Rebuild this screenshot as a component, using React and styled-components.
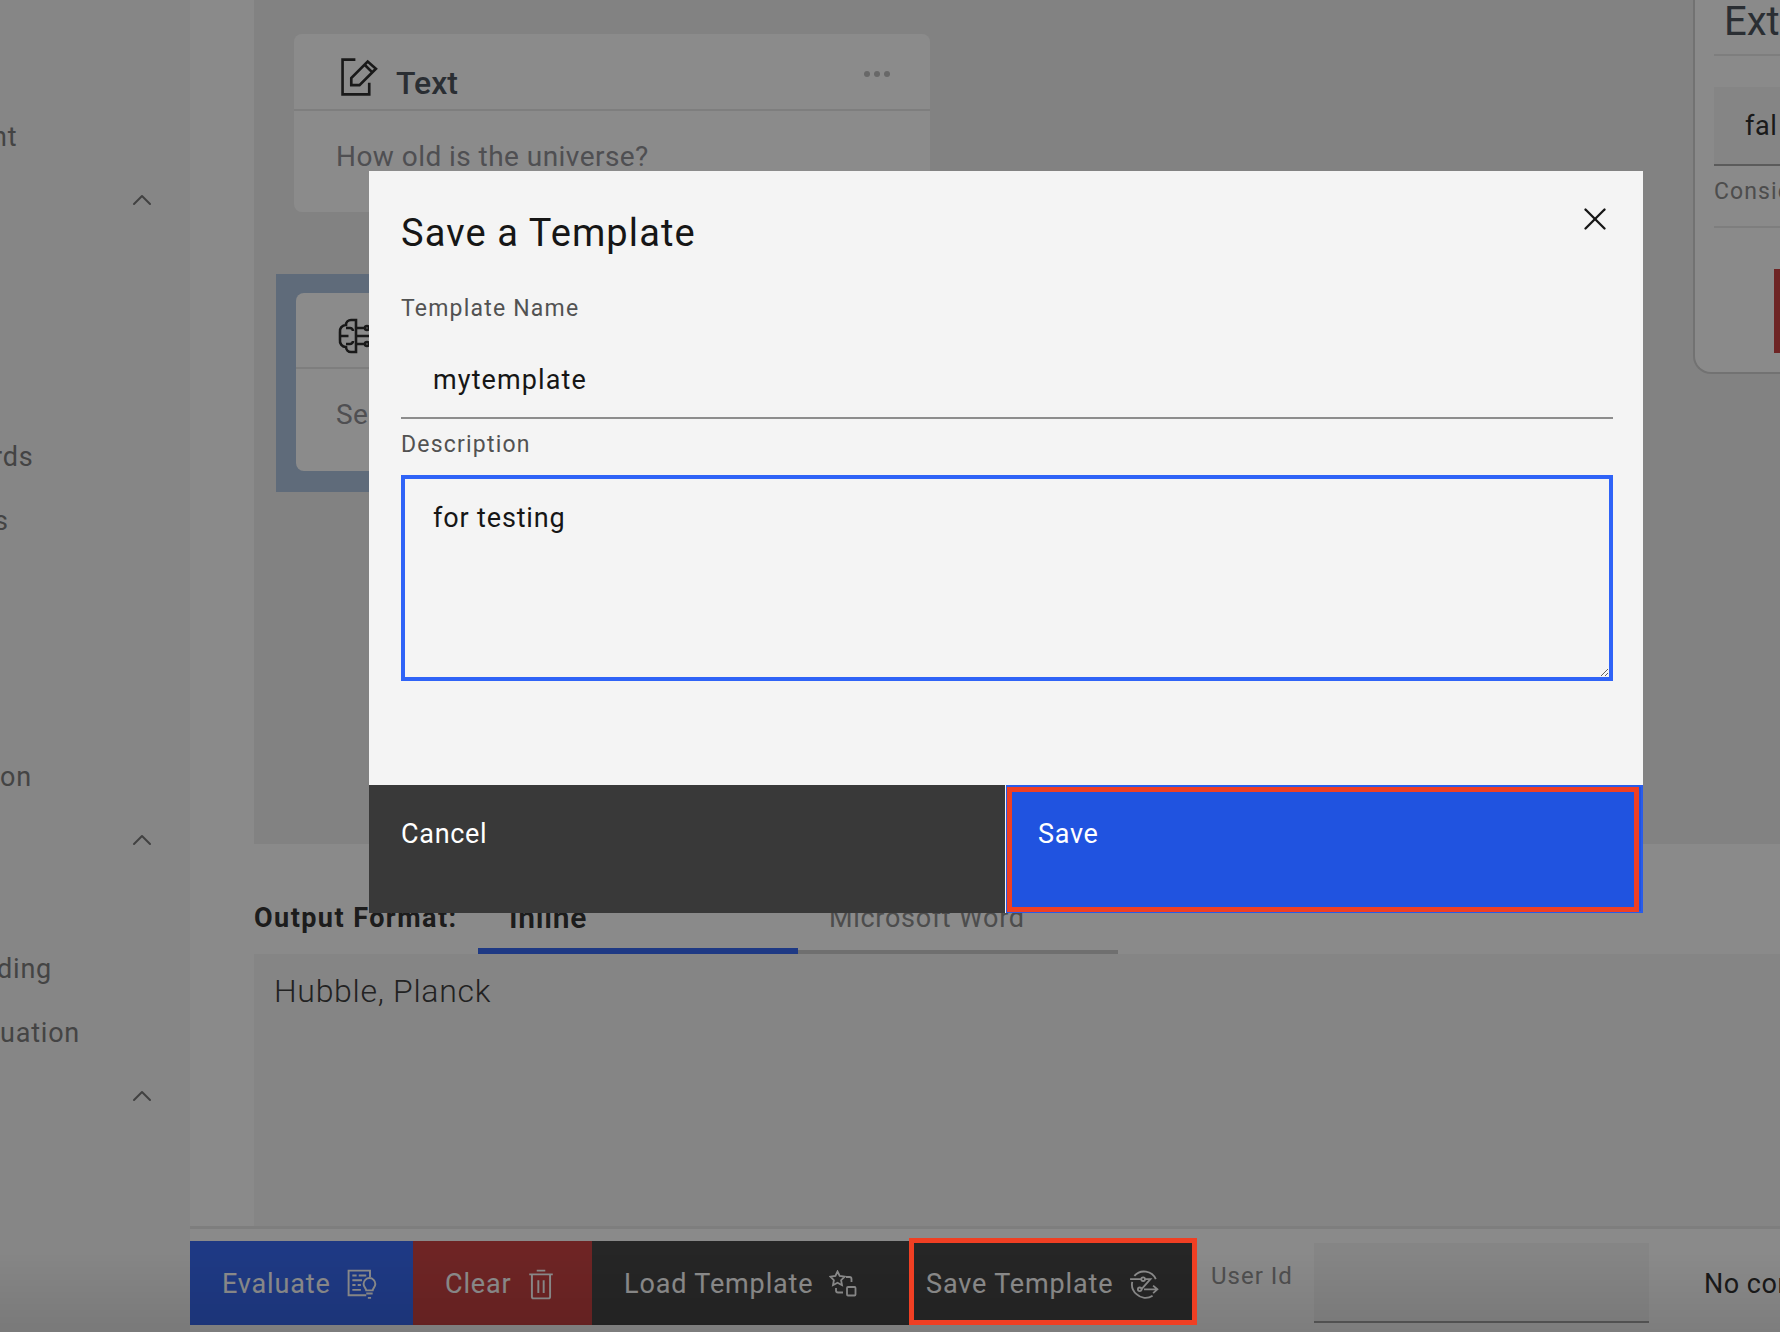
import React from 'react';
import styled, { createGlobalStyle } from 'styled-components';
import { ChevronUp, X } from 'lucide-react';

const GlobalStyle = createGlobalStyle`
  html, body, #root {
    margin: 0;
    height: 100%;
  }
  body {
    font-family: Roboto, "Liberation Sans", sans-serif;
    background: #fbfbfb;
    overflow: hidden;
  }
`;

const sideRows = [
  { text: 'nt', shift: -8 }, { chevron: true }, {}, {}, {},
  { text: 'rds', shift: -7 }, { text: 's', shift: -6 }, {}, {}, {},
  { text: 'on' }, { chevron: true }, {},
  { text: 'ding', shift: -3 }, { text: 'uation' }, { chevron: true },
];

function EditIcon() {
  return (
    <svg width="40" height="40" viewBox="0 0 39 39" fill="none" stroke="currentColor" strokeWidth="2.6">
      <path d="M15 2.5H2.5v34h26V25" />
      <path d="M11 27.5v-7L27 4.5l8 7-16 16z" />
      <path d="M24 7.5l7.5 7.5" />
    </svg>
  );
}

function BrainIcon() {
  return (
    <svg width="38" height="36" viewBox="0 0 38 36" fill="none" stroke="currentColor" strokeWidth="2.6">
      <path d="M18 2h-5a5 5 0 0 0-5 5 6 6 0 0 0-6 7v8a6 6 0 0 0 6 7 5 5 0 0 0 5 5h5z" />
      <path d="M8 10h4a3 3 0 0 1 3 3M2.500 18h8M8 26h4a3 3 0 0 0 3-3" />
      <path d="M18 10h8M18 18h14M18 26h8" />
      <circle cx="29" cy="10" r="2" />
      <circle cx="29" cy="26" r="2" />
    </svg>
  );
}

function EvaluateIcon() {
  return (
    <svg width="31" height="31" viewBox="0 0 29 29" fill="none" stroke="currentColor" strokeWidth="1.8">
      <path d="M18 24.5H1.5v-23h20v6" />
      <path d="M5 6h4M11 6h7M5 10.5h9M5 15h3M10 15h3M5 19.5h8" />
      <path d="M18 20c0-2-2.500-3-2.500-6a5.500 5.500 0 0 1 11 0c0 3-2.500 4-2.500 6z" />
      <path d="M18 23h6M19.500 27h3" />
    </svg>
  );
}

function TrashIcon() {
  return (
    <svg width="26" height="31" viewBox="0 0 24 29" fill="none" stroke="currentColor" strokeWidth="1.8">
      <path d="M1 5h22M8 1.500h8" />
      <path d="M3.500 5v21a1.500 1.500 0 0 0 1.500 1.500h14a1.500 1.500 0 0 0 1.500-1.500V5" />
      <path d="M9.500 10.500v12M14.500 10.500v12" />
    </svg>
  );
}

function LoadIcon() {
  return (
    <svg width="28" height="28" viewBox="0 0 28 28" fill="none" stroke="currentColor" strokeWidth="1.8">
      <path d="M8.500 1.500l2.200 4.500 5 .7-3.600 3.500.9 5-4.500-2.400-4.500 2.400.9-5L1.400 6.700l5-.7z" />
      <path d="M17 7h3.500a2 2 0 0 1 2 2v3" />
      <path d="M7 18v2.500a2 2 0 0 0 2 2h5" />
      <rect x="18" y="17" width="8.500" height="8.500" rx="1" />
    </svg>
  );
}

function SaveTemplateIcon() {
  return (
    <svg width="30" height="30" viewBox="0 0 28 28" fill="none" stroke="currentColor" strokeWidth="1.7">
      <path d="M5 6.500A12 12 0 0 1 25 9.500" />
      <path d="M3 12a12 12 0 0 0 4 11.500A12 12 0 0 0 22 25" />
      <path d="M1 9.500h10.500M15 9.500h5L11.500 19M14 19h12M22.500 15.500l4 3.500-4 3.500" />
      <circle cx="13.200" cy="9.500" r="1.700" />
      <circle cx="10" cy="19" r="1.700" />
    </svg>
  );
}

export default function App() {
  return (
    <>
      <GlobalStyle />
      <Page>
        <Sidebar>
          {sideRows.map((row, i) => (
            <SideRow key={i}>
              {row.text && <SideText $shift={row.shift || 0}>{row.text}</SideText>}
              {row.chevron && <SideChevron><ChevronUp size={32} strokeWidth={1.5} /></SideChevron>}
            </SideRow>
          ))}
        </Sidebar>

        <Main>
          <Workspace>
            <Canvas>
              <CardColumn>
                <Card>
                  <CardHeader>
                    <EditIcon />
                    <CardTitle>Text</CardTitle>
                    <CardDots>
                      <span /><span /><span />
                    </CardDots>
                  </CardHeader>
                  <CardBody>How old is the universe?</CardBody>
                </Card>
                <SelectedFrame>
                  <Card>
                    <CardHeader>
                      <BrainIcon />
                    </CardHeader>
                    <CardBody>Se</CardBody>
                  </Card>
                </SelectedFrame>
              </CardColumn>

              <SidePanel>
                <PanelTitle>Ext</PanelTitle>
                <PanelInput>fal</PanelInput>
                <PanelHint>Consid</PanelHint>
                <PanelAction />
              </SidePanel>
            </Canvas>

            <OutputRow>
              <OutputLabel>Output Format:</OutputLabel>
              <Tab $active>Inline</Tab>
              <Tab>Microsoft Word</Tab>
            </OutputRow>
            <OutputArea>Hubble, Planck</OutputArea>
          </Workspace>

          <Toolbar>
            <ToolButton $bg="#3869f0" $width={223}>Evaluate<EvaluateIcon /></ToolButton>
            <ToolButton $bg="#c84343" $width={179}>Clear<TrashIcon /></ToolButton>
            <ToolButton $bg="#454545" $width={317}>Load Template<LoadIcon /></ToolButton>
            <SaveTemplateButton $bg="#454545" $width={287}>Save Template<SaveTemplateIcon /></SaveTemplateButton>
            <UserLabel>User Id</UserLabel>
            <UserInput />
            <StatusText>No con</StatusText>
          </Toolbar>
        </Main>
      </Page>

      <Scrim>
        <Modal>
          <ModalBody>
            <ModalHead>
              <ModalTitle>Save a Template</ModalTitle>
              <CloseButton type="button"><X size={38} strokeWidth={1.5} /></CloseButton>
            </ModalHead>
            <FieldLabel htmlFor="template-name">Template Name</FieldLabel>
            <NameInput id="template-name" defaultValue="mytemplate" />
            <DescriptionLabel htmlFor="template-description">Description</DescriptionLabel>
            <DescriptionInput id="template-description" defaultValue="for testing" />
          </ModalBody>
          <ModalFooter>
            <CancelButton type="button">Cancel</CancelButton>
            <SaveButton type="button">Save</SaveButton>
          </ModalFooter>
        </Modal>
      </Scrim>
    </>
  );
}

const Page = styled.div`
  display: flex;
  height: 1332px;
  overflow: hidden;
`;

const Sidebar = styled.div`
  width: 190px;
  flex-shrink: 0;
  background: #f4f4f4;
  padding-top: 105px;
  box-sizing: border-box;
  overflow: hidden;
`;

const SideRow = styled.div`
  height: 64px;
  display: flex;
  align-items: center;
  justify-content: space-between;
`;

const SideText = styled.span`
  margin-left: ${p => p.$shift}px;
  font-size: 27px;
  color: #7c7c7c;
  letter-spacing: 0.8px;
`;

const SideChevron = styled.span`
  display: flex;
  color: #777;
  margin-left: auto;
  margin-right: 32px;
  margin-top: -2px;
`;

const Main = styled.div`
  flex: 1;
  min-width: 0;
  display: flex;
  flex-direction: column;
`;

const Workspace = styled.div`
  height: 1229px;
  box-sizing: border-box;
  padding-left: 64px;
  border-bottom: 3px solid #e5e5e5;
  display: flex;
  flex-direction: column;
`;

const Canvas = styled.div`
  height: 844px;
  flex-shrink: 0;
  background: #ededed;
  display: flex;
  justify-content: space-between;
  align-items: flex-start;
`;

const CardColumn = styled.div`
  padding: 34px 0 0 40px;
  width: 636px;
`;

const Card = styled.div`
  background: #fdfdfd;
  border-radius: 8px;
  height: 178px;
  width: 636px;
  overflow: hidden;
`;

const CardHeader = styled.div`
  height: 77px;
  box-sizing: border-box;
  padding: 23px 40px 0 46px;
  border-bottom: 2px solid #e5e5e5;
  display: flex;
  align-items: flex-start;
  gap: 16px;
  color: #2f2f2f;
`;

const CardTitle = styled.span`
  font-size: 32px;
  font-weight: 500;
  line-height: 34px;
  margin-top: 9px;
  color: #4e555d;
`;

const CardDots = styled.span`
  margin-left: auto;
  margin-top: 14px;
  display: flex;
  gap: 4px;

  span {
    width: 6px;
    height: 6px;
    border-radius: 50%;
    background: #bdbdbd;
  }
`;

const CardBody = styled.div`
  padding: 29px 0 0 42px;
  font-size: 28px;
  line-height: 34px;
  color: #909095;
  letter-spacing: 0.45px;
`;

const SelectedFrame = styled.div`
  margin: 62px 0 0 -18px;
  padding: 19px 20px 21px;
  width: 640px;
  background: #adc3de;

  ${CardHeader} {
    height: 76px;
    padding: 25px 40px 0 42px;
  }

  ${CardBody} {
    padding-left: 40px;
  }
`;

const SidePanel = styled.div`
  width: 87px;
  height: 374px;
  box-sizing: border-box;
  padding-left: 19px;
  background: #fbfbfb;
  border-left: 2px solid #d0d0d0;
  border-bottom: 2px solid #d0d0d0;
  border-bottom-left-radius: 18px;
  overflow: hidden;
  white-space: nowrap;
`;

const PanelTitle = styled.div`
  height: 56px;
  box-sizing: border-box;
  padding: 0 0 0 10px;
  font-size: 40px;
  line-height: 44px;
  color: #4e555d;
  border-bottom: 2px solid #e5e5e5;
`;

const PanelInput = styled.div`
  margin-top: 31px;
  height: 79px;
  box-sizing: border-box;
  padding: 22px 0 0 31px;
  font-size: 27px;
  line-height: 34px;
  letter-spacing: 0.6px;
  color: #303030;
  background: #f2f2f2;
  border-bottom: 2px solid #a7a7a7;
`;

const PanelHint = styled.div`
  height: 62px;
  box-sizing: border-box;
  padding-top: 11px;
  font-size: 23px;
  line-height: 30px;
  letter-spacing: 1.1px;
  color: #8c8c8c;
  border-bottom: 2px solid #e5e5e5;
`;

const PanelAction = styled.div`
  margin: 41px 0 0 60px;
  height: 84px;
  background: #c84343;
`;

const OutputRow = styled.div`
  height: 110px;
  flex-shrink: 0;
  display: flex;
  align-items: stretch;
`;

const OutputLabel = styled.div`
  width: 224px;
  padding-top: 57px;
  box-sizing: border-box;
  font-size: 27px;
  line-height: 34px;
  font-weight: 700;
  letter-spacing: 1.45px;
  white-space: nowrap;
  color: #333;
`;

const Tab = styled.div`
  width: 320px;
  box-sizing: border-box;
  padding: 57px 0 0 31px;
  font-size: ${p => (p.$active ? 30 : 27)}px;
  line-height: 34px;
  font-weight: ${p => (p.$active ? 600 : 400)};
  letter-spacing: 0.7px;
  color: ${p => (p.$active ? '#333' : '#8c8c8c')};
  border-bottom: ${p => (p.$active ? '6px solid #3869f0' : '4px solid #cacaca')};
`;

const OutputArea = styled.div`
  flex: 1;
  background: #f2f2f2;
  padding: 18px 0 0 20px;
  font-size: 32px;
  line-height: 38px;
  font-weight: 300;
  letter-spacing: 0.7px;
  color: #3e3e3e;
`;

const Toolbar = styled.div`
  flex: 1;
  display: flex;
  align-items: flex-start;
  padding-top: 12px;
  color: #fff;
`;

const ToolButton = styled.div`
  width: ${p => p.$width}px;
  height: 84px;
  flex-shrink: 0;
  box-sizing: border-box;
  padding: 2px 0 0 32px;
  background: ${p => p.$bg};
  display: flex;
  align-items: center;
  gap: 16px;
  font-size: 27px;
  letter-spacing: 0.85px;
`;

const SaveTemplateButton = styled(ToolButton)`
  position: relative;
  padding-left: 17px;

  &::after {
    content: '';
    position: absolute;
    inset: -3px -1px 0 0;
    border: 5px solid #f03f23;
    z-index: 20;
  }
`;

const UserLabel = styled.div`
  margin: 19px 0 0 15px;
  width: 103px;
  flex-shrink: 0;
  font-size: 24px;
  line-height: 32px;
  letter-spacing: 1px;
  white-space: nowrap;
  color: #909090;
`;

const UserInput = styled.div`
  margin-top: 2px;
  width: 335px;
  height: 80px;
  flex-shrink: 0;
  box-sizing: border-box;
  background: #f2f2f2;
  border-bottom: 2px solid #a0a0a0;
`;

const StatusText = styled.div`
  margin: 26px 0 0 55px;
  font-size: 27px;
  line-height: 34px;
  letter-spacing: 0.5px;
  color: #303030;
  white-space: nowrap;
`;

const Scrim = styled.div`
  position: fixed;
  inset: 0;
  z-index: 10;
  background: linear-gradient(to bottom, rgba(0, 0, 0, 0.45) 94%, rgba(0, 0, 0, 0.5) 100%);
  display: flex;
  align-items: flex-start;
  padding: 171px 0 0 369px;
`;

const Modal = styled.div`
  width: 1274px;
  height: 742px;
  background: #f4f4f4;
  display: flex;
  flex-direction: column;
`;

const ModalBody = styled.div`
  flex: 1;
  padding: 0 30px 0 32px;
  display: flex;
  flex-direction: column;
`;

const ModalHead = styled.div`
  display: flex;
  justify-content: space-between;
  align-items: flex-start;
  height: 121px;
  padding-top: 38px;
  box-sizing: border-box;
`;

const ModalTitle = styled.h2`
  margin: 0;
  font-size: 38px;
  line-height: 48px;
  font-weight: 400;
  letter-spacing: 1.1px;
  color: #161616;
`;

const CloseButton = styled.button`
  border: none;
  background: none;
  padding: 0;
  margin: -9px -1px 0 0;
  display: flex;
  color: #161616;
`;

const FieldLabel = styled.label`
  font-size: 23px;
  line-height: 34px;
  letter-spacing: 1.2px;
  color: #525252;
`;

const NameInput = styled.input`
  margin-top: 20px;
  height: 73px;
  box-sizing: border-box;
  padding: 0 32px 4px;
  border: none;
  border-bottom: 2px solid #8d8d8d;
  outline: none;
  background: transparent;
  font: inherit;
  font-size: 27px;
  letter-spacing: 1.1px;
  color: #161616;
`;

const DescriptionLabel = styled(FieldLabel)`
  margin-top: 9px;
`;

const DescriptionInput = styled.textarea`
  margin-top: 13px;
  height: 206px;
  box-sizing: border-box;
  padding: 22px 28px;
  border: 4px solid #2f63f7;
  outline: none;
  background: transparent;
  font: inherit;
  font-size: 27px;
  line-height: 34px;
  letter-spacing: 0.85px;
  color: #161616;
`;

const ModalFooter = styled.div`
  height: 128px;
  display: flex;
`;

const FooterButton = styled.button`
  border: none;
  font: inherit;
  font-size: 27px;
  line-height: 34px;
  letter-spacing: 0.7px;
  color: #fff;
  display: flex;
  align-items: flex-start;
`;

const CancelButton = styled(FooterButton)`
  width: 636px;
  padding: 32px 0 0 32px;
  background: #393939;
`;

const SaveButton = styled(FooterButton)`
  position: relative;
  flex: 1;
  margin-left: 1px;
  padding: 32px 0 0 32px;
  background: #2053e0;
  box-shadow: inset 0 0 0 2px #2a5ce9;

  &::after {
    content: '';
    position: absolute;
    inset: 2px 4px 1px 1px;
    border: 5px solid #f03f23;
  }
`;
